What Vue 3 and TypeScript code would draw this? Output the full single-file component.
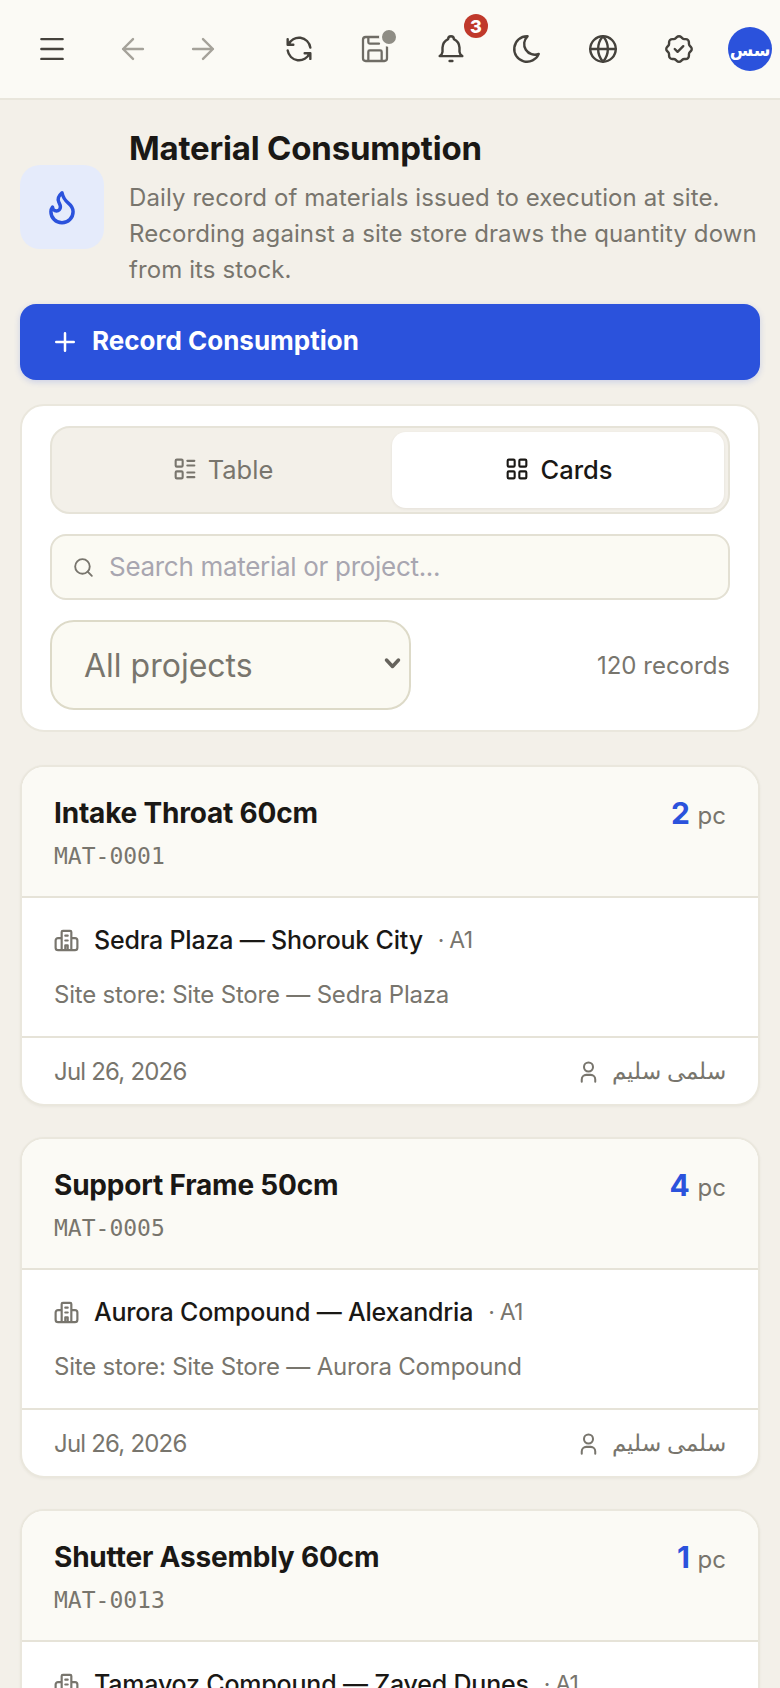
<script setup lang="ts">
interface Rec {
  name: string
  code: string
  qty: number
  project: string
  store: string
}

const records: Rec[] = [
  { name: 'Intake Throat 60cm', code: 'MAT-0001', qty: 2, project: 'Sedra Plaza — Shorouk City', store: 'Site Store — Sedra Plaza' },
  { name: 'Support Frame 50cm', code: 'MAT-0005', qty: 4, project: 'Aurora Compound — Alexandria', store: 'Site Store — Aurora Compound' },
  { name: 'Shutter Assembly 60cm', code: 'MAT-0013', qty: 1, project: 'Tamayoz Compound — Zayed Dunes', store: 'Site Store — Tamayoz Compound' }
]
</script>

<template>
  <div class="shell">
    <header class="topbar">
      <button class="ic"><svg viewBox="0 0 24 24"><path d="M4.500 5h15M4.500 12h15M4.500 19h15" /></svg></button>
      <div class="nav">
        <button class="ic dim"><svg viewBox="0 0 24 24"><path d="M12 19l-7-7 7-7M19 12H5" /></svg></button>
        <button class="ic dim"><svg viewBox="0 0 24 24"><path d="M5 12h14M12 5l7 7-7 7" /></svg></button>
      </div>
      <div class="tools">
        <button class="ic"><svg viewBox="0 0 24 24"><path d="M20 11a8.100 8.100 0 0 0-15.500-2m-.5-4v4h4M4 13a8.100 8.100 0 0 0 15.500 2m.5 4v-4h-4" /></svg></button>
        <button class="ic soft">
          <svg class="save" viewBox="0 0 24 24"><path d="M15.200 3a2 2 0 0 1 1.400.6l3.800 3.800a2 2 0 0 1 .6 1.400V19a2 2 0 0 1-2 2H5a2 2 0 0 1-2-2V5a2 2 0 0 1 2-2zM17 21v-7a1 1 0 0 0-1-1H8a1 1 0 0 0-1 1v7M7 3v4a1 1 0 0 0 1 1h7" /></svg>
          <span class="dot"></span>
        </button>
        <button class="ic">
          <svg viewBox="0 0 24 24"><path d="M10 5a2 2 0 1 1 4 0 7 7 0 0 1 4 6v3a4 4 0 0 0 2 3H4a4 4 0 0 0 2-3v-3a7 7 0 0 1 4-6M11 20.500h2" /></svg>
          <span class="badge">3</span>
        </button>
        <button class="ic"><svg viewBox="0 0 24 24"><path d="M12 3h.393a7.500 7.500 0 0 0 7.920 12.446A9 9 0 1 1 12 3z" /></svg></button>
        <button class="ic"><svg viewBox="0 0 24 24"><circle cx="12" cy="12" r="9" /><path d="M12 3a13.500 13.500 0 0 0 0 18 13.500 13.500 0 0 0 0-18M3 12h18" /></svg></button>
        <button class="ic"><svg viewBox="0 0 24 24"><path d="M5 7.200A2.200 2.200 0 0 1 7.200 5h1a2.200 2.200 0 0 0 1.550-.64l.7-.7a2.200 2.200 0 0 1 3.120 0l.7.7c.412.41.97.64 1.550.64h1A2.200 2.200 0 0 1 19 7.200v1c0 .58.23 1.138.64 1.550l.7.7a2.200 2.200 0 0 1 0 3.120l-.7.7a2.200 2.200 0 0 0-.64 1.550v1a2.200 2.200 0 0 1-2.200 2.200h-1a2.200 2.200 0 0 0-1.550.64l-.7.7a2.200 2.200 0 0 1-3.120 0l-.7-.7a2.200 2.200 0 0 0-1.550-.64h-1A2.200 2.200 0 0 1 5 16.800v-1a2.200 2.200 0 0 0-.64-1.550l-.7-.7a2.200 2.200 0 0 1 0-3.120l.7-.7A2.200 2.200 0 0 0 5 8.200v-1M9 12l2 2 4-4" /></svg></button>
      </div>
      <div class="avatar">سس</div>
    </header>

    <main class="page">
      <section class="heading">
        <div class="heading-icon">
          <svg viewBox="0 0 24 24"><path d="M8.500 14.500A2.500 2.500 0 0 0 11 12c0-1.380-.5-2-1-3-1.072-2.143-.224-4.054 2-6 .5 2.500 2 4.900 4 6.500 2 1.600 3 3.500 3 5.500a7 7 0 1 1-14 0c0-1.153.433-2.294 1-3a2.500 2.500 0 0 0 2.500 2.500z" /></svg>
        </div>
        <div class="heading-text">
          <h1>Material Consumption</h1>
          <p>Daily record of materials issued to execution at site. Recording against a site store draws the quantity down from its stock.</p>
        </div>
      </section>

      <button class="primary">
        <svg viewBox="0 0 24 24"><path d="M12 5v14M5 12h14" /></svg>
        Record Consumption
      </button>

      <section class="filters">
        <div class="toggle">
          <button class="tab">
            <svg viewBox="0 0 24 24"><path d="M5 4h4a1 1 0 0 1 1 1v4a1 1 0 0 1-1 1H5a1 1 0 0 1-1-1V5a1 1 0 0 1 1-1zM5 14h4a1 1 0 0 1 1 1v4a1 1 0 0 1-1 1H5a1 1 0 0 1-1-1v-4a1 1 0 0 1 1-1zM14 5h6M14 9h6M14 15h6M14 19h6" /></svg>
            Table
          </button>
          <button class="tab on">
            <svg viewBox="0 0 24 24"><rect x="4" y="4" width="6" height="6" rx="1" /><rect x="14" y="4" width="6" height="6" rx="1" /><rect x="4" y="14" width="6" height="6" rx="1" /><rect x="14" y="14" width="6" height="6" rx="1" /></svg>
            Cards
          </button>
        </div>
        <label class="search">
          <svg viewBox="0 0 24 24"><circle cx="11" cy="11" r="7" /><path d="M20 20l-4-4" /></svg>
          <input type="text" placeholder="Search material or project..." />
        </label>
        <div class="filter-row">
          <div class="select-wrap">
            <select class="project-select">
              <option>All projects</option>
            </select>
            <svg class="chevron" viewBox="0 0 17 13"><path d="M2.500 3l6 6.500 6-6.500" /></svg>
          </div>
          <span class="count">120 records</span>
        </div>
      </section>

      <article v-for="r in records" :key="r.code" class="card">
        <div class="card-head">
          <div>
            <div class="card-name">{{ r.name }}</div>
            <div class="card-code">{{ r.code }}</div>
          </div>
          <div class="qty"><b>{{ r.qty }}</b> pc</div>
        </div>
        <div class="card-body">
          <div class="project">
            <svg viewBox="0 0 24 24"><path d="M8 20V5a1 1 0 0 1 1-1h6a1 1 0 0 1 1 1v15M8 10H5a2 2 0 0 0-2 2v6a2 2 0 0 0 2 2h14a2 2 0 0 0 2-2v-6a2 2 0 0 0-2-2h-3M11 8h2M11 12h2M11 20v-4h2v4" /></svg>
            <span class="project-name">{{ r.project }}</span>
            <span class="zone">· A1</span>
          </div>
          <div class="store">Site store: {{ r.store }}</div>
        </div>
        <div class="card-foot">
          <span class="date">Jul 26, 2026</span>
          <span class="person">
            <svg viewBox="0 0 24 24"><circle cx="12" cy="8" r="4" /><path d="M6 21v-2a4 4 0 0 1 4-4h4a4 4 0 0 1 4 4v2" /></svg>
            <span>سلمى سليم</span>
          </span>
        </div>
      </article>
    </main>
  </div>
</template>

<style>
body {
  background: #f3f0e9;
}
</style>

<style scoped>
.shell {
  height: 1688px;
  overflow: hidden;
  background: #f3f0e9;
  font-family: Inter, "Noto Sans", "Liberation Sans", sans-serif;
  color: #1a1815;
}
button {
  font-family: inherit;
  border: 0;
  background: none;
  padding: 0;
}
svg {
  fill: none;
  stroke: currentColor;
  stroke-width: 1.8;
  stroke-linecap: round;
  stroke-linejoin: round;
  flex: none;
}
.topbar {
  height: 98px;
  border-bottom: 2px solid #e9e6dc;
  background: #fbfaf5;
  display: flex;
  align-items: center;
  padding: 0 8px 0 32px;
}
.nav {
  display: flex;
  gap: 30px;
  margin: 0 56px 0 41px;
}
.tools {
  display: flex;
  gap: 36px;
}
.ic {
  position: relative;
  width: 40px;
  height: 40px;
  display: flex;
  align-items: center;
  justify-content: center;
  color: #45423c;
}
.ic svg {
  width: 34px;
  height: 34px;
  stroke-width: 1.7;
}
.ic svg.save {
  width: 32px;
  height: 32px;
}
.dim {
  color: #a5a29a;
}
.soft {
  color: #6f6c65;
}
.dot {
  position: absolute;
  top: -2px;
  right: -4px;
  width: 14px;
  height: 14px;
  border-radius: 50%;
  background: #8f8d85;
  border: 3px solid #fbfaf5;
}
.badge {
  position: absolute;
  top: -15px;
  right: -17px;
  width: 24px;
  height: 24px;
  border-radius: 50%;
  background: #c0392b;
  color: #fff;
  font-size: 18px;
  font-weight: 800;
  display: flex;
  align-items: center;
  justify-content: center;
}
.avatar {
  margin-left: 29px;
  width: 44px;
  height: 44px;
  border-radius: 50%;
  background: #2b52dc;
  color: #fff;
  font-size: 17px;
  font-weight: 700;
  display: flex;
  align-items: center;
  justify-content: center;
  font-family: "Noto Sans", "DejaVu Sans", sans-serif;
}
.page {
  padding: 26px 20px 0;
}
.heading {
  display: flex;
  align-items: center;
  gap: 25px;
}
.heading-icon {
  width: 84px;
  height: 84px;
  border-radius: 20px;
  background: #e5ebfb;
  color: #2b52dc;
  display: flex;
  align-items: center;
  justify-content: center;
  flex: none;
}
.heading-icon svg {
  width: 38px;
  height: 38px;
  stroke-width: 2.200;
}
h1 {
  margin: 0 0 10px;
  font-size: 33px;
  line-height: 44px;
  font-weight: 700;
  letter-spacing: -0.2px;
}
.heading-text p {
  margin: 0;
  font-size: 24px;
  line-height: 36px;
  letter-spacing: 0.1px;
  color: #78756d;
}
.primary {
  margin-top: 16px;
  width: 100%;
  height: 76px;
  border-radius: 16px;
  background: #2b52dc;
  color: #fff;
  display: flex;
  align-items: center;
  gap: 12px;
  padding: 0 30px 4px;
  font-size: 26px;
  font-weight: 700;
  box-shadow: 0 2px 6px rgba(43, 82, 220, 0.2);
}
.primary svg {
  width: 30px;
  height: 30px;
  margin-top: 4px;
  stroke-width: 2;
}
.filters {
  margin-top: 24px;
  background: #fff;
  border: 2px solid #eae7dd;
  border-radius: 24px;
  padding: 20px 28px;
  display: flex;
  flex-direction: column;
  gap: 20px;
}
.toggle {
  display: grid;
  grid-template-columns: 1fr 1fr;
  gap: 4px;
  height: 88px;
  box-sizing: border-box;
  padding: 4px;
  background: #f3f0e9;
  border: 2px solid #e6e3d8;
  border-radius: 20px;
}
.tab {
  display: flex;
  align-items: center;
  justify-content: center;
  gap: 9px;
  padding-bottom: 2px;
  font-size: 25.500px;
  color: #78756d;
  border-radius: 14px;
}
.tab svg {
  width: 28px;
  height: 28px;
}
.tab.on {
  background: #fff;
  color: #1a1815;
  font-weight: 500;
  box-shadow: 0 1px 3px rgba(60, 55, 40, 0.08);
}
.search {
  height: 66px;
  box-sizing: border-box;
  border: 2px solid #e3e0d3;
  border-radius: 16px;
  background: #fbfaf3;
  display: flex;
  align-items: center;
  gap: 11px;
  padding: 0 19px;
  color: #78756d;
}
.search svg {
  width: 25px;
  height: 25px;
}
.search input {
  flex: 1;
  border: 0;
  outline: 0;
  background: none;
  padding: 0 2px 2px;
  font: inherit;
  font-size: 26px;
  letter-spacing: -0.3px;
}
.search input::placeholder {
  color: #a8a6b0;
  opacity: 1;
}
.filter-row {
  display: flex;
  align-items: center;
  justify-content: space-between;
}
.select-wrap {
  position: relative;
  display: flex;
}
.project-select {
  appearance: none;
  width: 361px;
  height: 90px;
  box-sizing: border-box;
  border: 2px solid #dddac8;
  border-radius: 24px;
  background: #fbfaf3;
  color: #78756d;
  padding: 0 0 0 32px;
  font: inherit;
  font-size: 32px;
}
.chevron {
  position: absolute;
  top: 37px;
  right: 10px;
  width: 17px;
  height: 13px;
  color: #66635c;
  stroke-width: 3.500;
  pointer-events: none;
}
.count {
  font-size: 24px;
  color: #78756d;
}
.card {
  margin-top: 31px;
  background: #fff;
  border: 2px solid #eae7dd;
  border-radius: 24px;
  overflow: hidden;
  box-shadow: 0 1px 3px rgba(60, 55, 40, 0.05);
}
.filters + .card {
  margin-top: 33px;
}
.card-head {
  height: 131px;
  box-sizing: border-box;
  background: #fbfaf5;
  border-bottom: 2px solid #e6e3d8;
  padding: 28px 32px 0;
  display: flex;
  justify-content: space-between;
  align-items: flex-start;
}
.card-name {
  font-size: 28px;
  line-height: 36px;
  font-weight: 700;
  letter-spacing: -0.2px;
}
.card-code {
  margin-top: 10px;
  font-family: "DejaVu Sans Mono", "Liberation Mono", monospace;
  font-size: 23px;
  line-height: 30px;
  color: #78756d;
}
.qty {
  font-size: 24px;
  color: #78756d;
  line-height: 36px;
}
.qty b {
  font-size: 30px;
  color: #2b52dc;
  font-weight: 700;
  margin-right: 1px;
}
.card-body {
  height: 140px;
  border-bottom: 2px solid #e6e3d8;
  padding: 24px 32px 0;
  box-sizing: border-box;
}
.project {
  display: flex;
  align-items: center;
  gap: 13px;
  font-size: 25px;
  line-height: 36px;
}
.project svg {
  width: 29px;
  height: 29px;
  margin-left: -2px;
  color: #78756d;
}
.project-name {
  font-weight: 500;
  letter-spacing: -0.2px;
}
.zone {
  color: #78756d;
  font-size: 23px;
  letter-spacing: -0.8px;
  margin-left: 2px;
}
.store {
  margin-top: 20px;
  font-size: 24px;
  line-height: 34px;
  letter-spacing: -0.2px;
  color: #78756d;
}
.card-foot {
  height: 66px;
  padding: 0 32px;
  display: flex;
  align-items: center;
  justify-content: space-between;
  font-size: 24px;
  color: #78756d;
}
.date {
  letter-spacing: -0.8px;
}
.person {
  display: flex;
  align-items: center;
  gap: 10px;
  font-size: 23px;
}
.person svg {
  width: 27px;
  height: 27px;
}
</style>
